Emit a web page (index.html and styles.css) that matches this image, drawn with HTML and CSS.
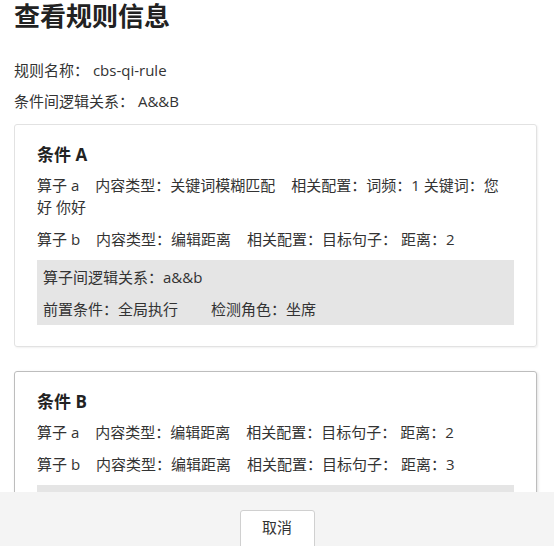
FILE: index.html
```html
<!DOCTYPE html>
<html lang="zh-CN">
<head>
<meta charset="utf-8">
<title>查看规则信息</title>
<link rel="stylesheet" href="styles.css">
</head>
<body>
<div class="page">
  <main class="content">
    <h1 class="title">查看规则信息</h1>
    <p class="meta">规则名称： cbs-qi-rule</p>
    <p class="meta">条件间逻辑关系： A&amp;&amp;B</p>

    <section class="card">
      <h2 class="card-title">条件 A</h2>
      <p class="op"><span class="op-name">算子 a</span><span class="seg">内容类型：关键词模糊匹配</span><span class="seg">相关配置：词频：1 关键词：您好 你好</span></p>
      <p class="op"><span class="op-name">算子 b</span><span class="seg">内容类型：编辑距离</span><span class="seg">相关配置：目标句子： 距离：2</span></p>
      <div class="logic">
        <p class="logic-line">算子间逻辑关系：a&amp;&amp;b</p>
        <p class="logic-line"><span>前置条件：全局执行</span><span class="seg-wide">检测角色：坐席</span></p>
      </div>
    </section>

    <section class="card card-active">
      <h2 class="card-title">条件 B</h2>
      <p class="op"><span class="op-name">算子 a</span><span class="seg">内容类型：编辑距离</span><span class="seg">相关配置：目标句子： 距离：2</span></p>
      <p class="op"><span class="op-name">算子 b</span><span class="seg">内容类型：编辑距离</span><span class="seg">相关配置：目标句子： 距离：3</span></p>
      <div class="logic">
        <p class="logic-line">算子间逻辑关系：a&amp;&amp;b</p>
        <p class="logic-line"><span>前置条件：全局执行</span><span class="seg-wide">检测角色：坐席</span></p>
      </div>
    </section>
  </main>
  <footer class="footer">
    <button class="btn" type="button">取消</button>
  </footer>
</div>
</body>
</html>
```

FILE: styles.css
```css
* { box-sizing: border-box; }

html, body {
  margin: 0;
  padding: 0;
  background: #fff;
}

body {
  font-family: "Open Sans", "Noto Sans CJK TC", sans-serif;
  font-size: 15px;
  color: #333;
}

.page {
  height: 546px;
  display: flex;
  flex-direction: column;
  overflow: hidden;
}

.content {
  flex: 0 0 492px;
  height: 492px;
  overflow: hidden;
  padding: 0 17px 0 14px;
}

.title {
  margin: 0;
  font-size: 26px;
  line-height: 32px;
  font-weight: 700;
  color: #222;
}

.meta {
  margin: 0;
  line-height: 22px;
}

.title + .meta { margin-top: 27px; }
.meta + .meta { margin-top: 9px; }

.card {
  margin-top: 12px;
  border: 1px solid #e2e2e2;
  border-radius: 3px;
  box-shadow: 1px 1px 2px rgba(0, 0, 0, 0.06);
  padding: 19px 22px 21px 22px;
}

.card + .card { margin-top: 24px; }

.card-active {
  border-color: #bdbdbd;
  box-shadow: 1px 1px 3px rgba(0, 0, 0, 0.12);
}

.card-title {
  margin: 0 0 8px;
  font-size: 17px;
  line-height: 22px;
  font-weight: 700;
  color: #222;
}

.op {
  margin: 0 0 10px;
  padding-right: 4px;
  line-height: 22px;
}

.seg { margin-left: 16px; }
.seg-wide { margin-left: 33px; }

.logic {
  background: #e5e5e5;
  padding: 6px 6px 5px;
}

.logic-line {
  margin: 0;
  line-height: 22px;
}

.logic-line + .logic-line { margin-top: 10px; }

.footer {
  flex: 0 0 54px;
  background: #f4f4f4;
  display: flex;
  justify-content: center;
  align-items: flex-start;
  padding-top: 18px;
}

.btn {
  width: 75px;
  height: 40px;
  background: #fff;
  border: 1px solid #d0d0d0;
  border-radius: 3px;
  font-family: "Open Sans", "Noto Sans CJK TC", sans-serif;
  font-size: 15px;
  color: #333;
  padding: 0 0 8px;
}
```
